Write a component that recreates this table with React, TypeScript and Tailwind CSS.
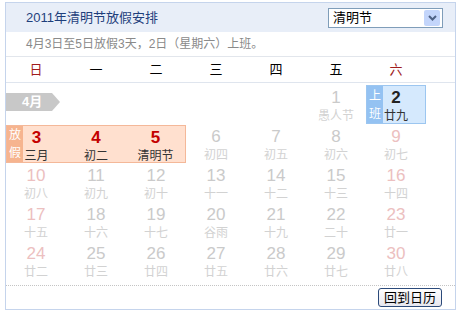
import React from "react";

type Day = { d: number; l: string; wk?: boolean };

const rows: (Day | null)[][] = [
  [null, null, null, null, null, { d: 1, l: "愚人节" }, { d: 2, l: "廿九", wk: true }],
  [
    { d: 3, l: "三月", wk: true },
    { d: 4, l: "初二" },
    { d: 5, l: "清明节" },
    { d: 6, l: "初四" },
    { d: 7, l: "初五" },
    { d: 8, l: "初六" },
    { d: 9, l: "初七", wk: true },
  ],
  [
    { d: 10, l: "初八", wk: true },
    { d: 11, l: "初九" },
    { d: 12, l: "初十" },
    { d: 13, l: "十一" },
    { d: 14, l: "十二" },
    { d: 15, l: "十三" },
    { d: 16, l: "十四", wk: true },
  ],
  [
    { d: 17, l: "十五", wk: true },
    { d: 18, l: "十六" },
    { d: 19, l: "十七" },
    { d: 20, l: "谷雨" },
    { d: 21, l: "十九" },
    { d: 22, l: "二十" },
    { d: 23, l: "廿一", wk: true },
  ],
  [
    { d: 24, l: "廿二", wk: true },
    { d: 25, l: "廿三" },
    { d: 26, l: "廿四" },
    { d: 27, l: "廿五" },
    { d: 28, l: "廿六" },
    { d: 29, l: "廿七" },
    { d: 30, l: "廿八", wk: true },
  ],
];

const weekdays = ["日", "一", "二", "三", "四", "五", "六"];

function Cell({ day, ri, ci }: { day: Day | null; ri: number; ci: number }) {
  if (ri === 0 && ci === 0) {
    return (
      <div className="h-[39px] pt-[8px]">
        <div className="h-[18px] w-[54px] bg-[#c8c8c8] pl-[16px] text-[13px] font-bold leading-[18px] text-white [clip-path:polygon(0_0,46px_0,54px_50%,46px_100%,0_100%)]">
          4月
        </div>
      </div>
    );
  }
  if (!day) return <div className="h-[39px]" />;

  const holiday = ri === 1 && ci <= 2;
  const work = day.d === 2;

  if (holiday) {
    return (
      <div
        className={
          "relative flex h-[38px] mt-[1px] flex-col items-center border-y border-[#f4b899] bg-[#ffe0cf] " +
          (ci === 0 ? "border-l " : "") +
          (ci === 2 ? "border-r " : "")
        }
      >
        {ci === 0 && (
          <div className="absolute left-0 top-0 flex h-full w-[16px] flex-col items-center justify-center gap-[2px] bg-[#f6b48f] text-[12px] leading-[16px] text-white">
            <span>放</span>
            <span>假</span>
          </div>
        )}
        <div className="pt-[3px] text-[17px] font-bold leading-[18px] text-[#c40000]">{day.d}</div>
        <div className="mt-[1px] text-[12px] leading-[16px] text-[#333]">{day.l}</div>
      </div>
    );
  }

  if (work) {
    return (
      <div className="relative flex h-[39px] flex-col items-center border border-[#9cc6f0] bg-[#d5e9fd]">
        <div className="absolute left-0 top-0 flex h-full w-[16px] flex-col items-center justify-center gap-[2px] bg-[#94c2f2] text-[12px] leading-[16px] text-white">
          <span>上</span>
          <span>班</span>
        </div>
        <div className="pt-[3px] text-[17px] font-bold leading-[18px] text-[#222]">{day.d}</div>
        <div className="mt-[1px] text-[12px] leading-[16px] text-[#333]">{day.l}</div>
      </div>
    );
  }

  return (
    <div className="flex h-[39px] flex-col items-center">
      <div
        className={
          "pt-[4px] text-[17px] leading-[18px] " + (day.wk ? "text-[#ecc0c0]" : "text-[#cacaca]")
        }
      >
        {day.d}
      </div>
      <div className="mt-[1px] text-[12px] leading-[16px] text-[#d2d2d2]">{day.l}</div>
    </div>
  );
}

export default function App() {
  return (
    <div className="h-[315px] w-[466px] bg-white pl-[5px] pt-[2px] font-['Liberation_Sans','Noto_Sans_CJK_SC',sans-serif]">
      <div className="w-[451px] border border-[#c5d4ec]">
        {/* header */}
        <div className="flex h-[29px] items-center justify-between bg-[#e8eef8] pl-[20px] pr-[12px]">
          <span className="text-[13px] leading-[16px] text-[#1f3f7c]">2011年清明节放假安排</span>
          <div className="mt-[1px] flex h-[20px] w-[115px] items-center justify-between border border-[#7f9db9] bg-white pl-[4px] pr-[2px]">
            <span className="text-[13px] leading-[16px] text-black">清明节</span>
            <div className="flex h-[16px] w-[16px] items-center justify-center rounded-[2px] bg-[#c3d5fb]">
              <svg width="9" height="6" viewBox="0 0 9 6">
                <path d="M1 1 L4.5 4.5 L8 1" fill="none" stroke="#4d6185" strokeWidth="2" />
              </svg>
            </div>
          </div>
        </div>
        {/* info */}
        <div className="flex h-[25px] items-center border-b border-[#e2e6ec] pl-[20px]">
          <span className="text-[12px] leading-[16px] text-[#8a8a8a]">4月3日至5日放假3天，2日（星期六）上班。</span>
        </div>
        {/* weekdays */}
        <div className="h-[26px] border-b border-[#dfe5ee]">
          <div className="grid h-full w-[420px] grid-cols-7 items-center">
            {weekdays.map((w, i) => (
              <div
                key={w}
                className={
                  "text-center text-[13px] leading-[16px] " +
                  (i === 0 || i === 6 ? "text-[#a01c1c]" : "text-black")
                }
              >
                {w}
              </div>
            ))}
          </div>
        </div>
        {/* calendar */}
        <div className="pb-[5px] pt-[2px]">
          <div className="grid w-[420px] grid-cols-7">
            {rows.map((row, ri) =>
              row.map((day, ci) => <Cell key={ri + "-" + ci} day={day} ri={ri} ci={ci} />)
            )}
          </div>
        </div>
        {/* footer */}
        <div className="flex justify-end border-t border-dotted border-[#c4c4c4] pb-[2px] pr-[13px] pt-[2px]">
          <button className="flex h-[19px] w-[64px] items-center justify-center rounded-[3px] border border-[#2b4a7a] bg-gradient-to-b from-white to-[#e6e6ee] text-[13px] leading-[16px] text-black">
            回到日历
          </button>
        </div>
      </div>
    </div>
  );
}
